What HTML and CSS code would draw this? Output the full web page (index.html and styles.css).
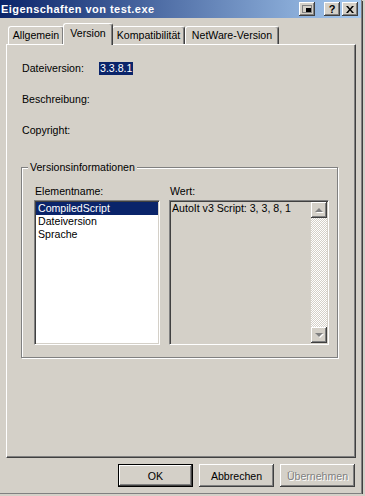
FILE: index.html
```html
<!DOCTYPE html>
<html lang="de">
<head>
    <meta charset="UTF-8">
    <meta name="viewport" content="width=device-width, initial-scale=1.0">
    <title>Eigenschaften von test.exe</title>
    <link rel="stylesheet" href="styles.css">
</head>
<body>
    <div class="window">
        <div class="titlebar">
            <span class="title">Eigenschaften von test.exe</span>
            <div class="caption-buttons">
                <span class="cap-btn ctx">
                    <svg width="10" height="8" viewBox="0 0 10 8"><rect x="0.5" y="0.5" width="9" height="7" fill="none" stroke="#808080"/><rect x="4" y="3" width="5" height="4" fill="#000"/></svg>
                </span>
                <span class="cap-btn help">?</span>
                <span class="cap-btn close">
                    <svg width="8" height="7" viewBox="0 0 8 7"><path d="M0 0h2l2 2.5 2-2.5h2l-3 3.5 3 3.5h-2l-2-2.5-2 2.5h-2l3-3.5z" fill="#000"/></svg>
                </span>
            </div>
        </div>

        <div class="tabs">
            <div class="tab w-allg">Allgemein</div>
            <div class="tab active w-ver">Version</div>
            <div class="tab w-komp">Kompatibilität</div>
            <div class="tab w-nw">NetWare-Version</div>
        </div>

        <div class="panel">
            <div class="fields">
                <span>Dateiversion:</span><span class="sel">3.3.8.1</span>
                <span>Beschreibung:</span><span></span>
                <span>Copyright:</span><span></span>
            </div>

            <fieldset class="group">
                <legend>Versionsinformationen</legend>
                <div class="cols">
                    <div class="col name-col">
                        <div class="col-label">Elementname:</div>
                        <div class="listbox">
                            <div class="item selected">CompiledScript</div>
                            <div class="item">Dateiversion</div>
                            <div class="item">Sprache</div>
                        </div>
                    </div>
                    <div class="col value-col">
                        <div class="col-label">Wert:</div>
                        <div class="valuebox">
                            <div class="value-text">AutoIt v3 Script: 3, 3, 8, 1</div>
                            <div class="scrollbar">
                                <span class="sb-btn"><span class="arrow up"></span></span>
                                <span class="sb-btn"><span class="arrow down"></span></span>
                            </div>
                        </div>
                    </div>
                </div>
            </fieldset>
        </div>

        <div class="dlg-buttons">
            <button class="btn default">OK</button>
            <button class="btn">Abbrechen</button>
            <button class="btn" disabled>Übernehmen</button>
        </div>
    </div>
</body>
</html>
```
FILE: styles.css
```css
body {
    margin: 0;
    background: #d4d0c8;
    font-family: "Liberation Sans", Arial, sans-serif;
    font-size: 10.6px;
    color: #000;
}
.window {
    width: 361px;
    height: 493px;
    background: #d4d0c8;
    border-right: 1px solid #808080;
    border-bottom: 1px solid #808080;
    box-shadow: 1px 1px 0 #404040;
    display: flex;
    flex-direction: column;
}

/* title bar */
.titlebar {
    height: 18px;
    display: flex;
    align-items: center;
    padding-left: 1px;
    background: linear-gradient(to right, #0a246a, #a6caf0);
}
.title {
    flex: 1;
    color: #fff;
    font-weight: bold;
    font-size: 11px;
    letter-spacing: 0.45px;
}
.caption-buttons {
    display: flex;
    gap: 2px;
    margin-right: 3px;
}
.cap-btn {
    width: 16px;
    height: 14px;
    box-sizing: border-box;
    background: #d4d0c8;
    box-shadow: inset -1px -1px #404040, inset 1px 1px #fff, inset -2px -2px #808080;
    display: flex;
    align-items: center;
    justify-content: center;
    font-weight: bold;
    font-size: 11px;
    line-height: 14px;
}
.cap-btn.ctx {
    margin-right: 7px;
}

/* tabs */
.tabs {
    display: flex;
    align-items: flex-end;
    height: 21px;
    margin-top: 5px;
    padding-left: 8px;
}
.tab {
    height: 18px;
    box-sizing: border-box;
    border: 1px solid #fff;
    border-bottom: 0;
    border-right-color: #404040;
    border-radius: 3px 3px 0 0;
    box-shadow: inset -1px 0 #808080;
    text-align: center;
    line-height: 16px;
}
.tab.active {
    height: 22px;
    margin: 0 -1px -1px;
    padding-top: 1px;
    background: #d4d0c8;
    position: relative;
    z-index: 1;
}
.w-allg { width: 56px; }
.w-ver { width: 50px; }
.w-komp { width: 73px; }
.w-nw { width: 94px; }

/* tab page */
.panel {
    margin-left: 6px;
    width: 350px;
    height: 414px;
    box-sizing: border-box;
    border: 1px solid;
    border-color: #fff #404040 #404040 #fff;
    box-shadow: inset -1px -1px #808080;
    padding: 17px 0 0 15px;
}
.fields {
    display: grid;
    grid-template-columns: 77px auto;
    row-gap: 18px;
    line-height: 13px;
    height: 75px;
}
.sel {
    justify-self: start;
    background: #0a246a;
    color: #fff;
    padding: 0 1px;
}

.group {
    width: 317px;
    box-sizing: border-box;
    margin: 24px 0 0 -1px;
    padding: 11px 8px 12px 12px;
    border: 1px solid #808080;
    box-shadow: inset 1px 1px #fff, 1px 1px #fff;
}
.group legend {
    padding: 0 2px;
    margin-left: -6px;
    line-height: 13px;
    background: #d4d0c8;
}
.cols {
    display: flex;
    gap: 9px;
}
.name-col { width: 126px; }
.value-col { width: 160px; }
.col-label {
    line-height: 13px;
    margin-bottom: 2px;
    padding-left: 1px;
}
.listbox,
.valuebox {
    height: 145px;
    box-sizing: border-box;
    border: 1px solid;
    border-color: #808080 #fff #fff #808080;
    box-shadow: inset 1px 1px #404040, inset -1px -1px #d4d0c8;
    padding: 1px;
}
.listbox {
    background: #fff;
}
.item {
    line-height: 13px;
    padding-left: 2px;
}
.item.selected {
    background: #0a246a;
    color: #fff;
}
.valuebox {
    background: #d4d0c8;
    display: flex;
}
.value-text {
    flex: 1;
    padding-left: 1px;
    line-height: 13px;
}
.scrollbar {
    width: 16px;
    display: flex;
    flex-direction: column;
    justify-content: space-between;
    background-color: #d4d0c8;
    background-image: conic-gradient(#fff 25%, #d4d0c8 0 50%, #fff 0 75%, #d4d0c8 0);
    background-size: 2px 2px;
}
.sb-btn {
    width: 16px;
    height: 16px;
    box-sizing: border-box;
    background: #d4d0c8;
    box-shadow: inset -1px -1px #404040, inset 1px 1px #fff, inset -2px -2px #808080;
    display: flex;
    align-items: center;
    justify-content: center;
}
.arrow {
    width: 0;
    height: 0;
    border-left: 4px solid transparent;
    border-right: 4px solid transparent;
    filter: drop-shadow(1px 1px 0 #fff);
}
.arrow.up { border-bottom: 4px solid #808080; }
.arrow.down { border-top: 4px solid #808080; }

/* dialog buttons */
.dlg-buttons {
    display: flex;
    justify-content: flex-end;
    gap: 6px;
    margin-top: 6px;
    padding-right: 6px;
}
.btn {
    width: 75px;
    height: 23px;
    box-sizing: border-box;
    padding: 0;
    border: 0;
    font: inherit;
    color: #000;
    background: #d4d0c8;
    box-shadow: inset -1px -1px #404040, inset 1px 1px #fff, inset -2px -2px #808080;
}
.btn.default {
    border: 1px solid #000;
}
.btn:disabled {
    color: #808080;
    text-shadow: 1px 1px 0 #fff;
}
```
